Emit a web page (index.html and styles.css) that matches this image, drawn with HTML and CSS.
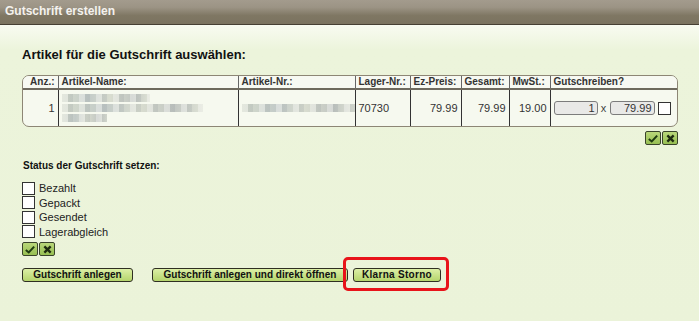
FILE: index.html
```html
<!DOCTYPE html>
<html lang="de">
<head>
  <meta charset="UTF-8" />
  <title>Gutschrift erstellen</title>
  <link rel="stylesheet" href="styles.css">
</head>
<body>
  <div class="titlebar">Gutschrift erstellen</div>

  <div class="content">
    <h1>Artikel für die Gutschrift auswählen:</h1>

    <div class="table-wrap">
      <table class="items">
        <colgroup>
          <col style="width:35px">
          <col style="width:180px">
          <col style="width:117px">
          <col style="width:55px">
          <col style="width:51px">
          <col style="width:48px">
          <col style="width:41px">
          <col>
        </colgroup>
        <thead>
          <tr>
            <th class="num">Anz.:</th>
            <th>Artikel-Name:</th>
            <th>Artikel-Nr.:</th>
            <th>Lager-Nr.:</th>
            <th>Ez-Preis:</th>
            <th>Gesamt:</th>
            <th>MwSt.:</th>
            <th>Gutschreiben?</th>
          </tr>
        </thead>
        <tbody>
          <tr>
            <td class="num">1</td>
            <td>
              <div class="blur"><span style="width:88px"></span><span style="width:141px"></span><span style="width:45px"></span></div>
            </td>
            <td>
              <div class="blur"><span style="width:113px"></span></div>
            </td>
            <td>70730</td>
            <td class="num">79.99</td>
            <td class="num">79.99</td>
            <td class="num">19.00</td>
            <td class="gut">
              <input class="field f-qty" type="text" value="1"><span class="times">x</span><input class="field f-price" type="text" value="79.99"><span class="box"></span>
            </td>
          </tr>
        </tbody>
      </table>
    </div>

    <div class="actions right">
      <span class="icon-btn"><svg viewBox="0 0 12 10" width="10" height="9"><path d="M1 5.5 L4.5 8.5 L11 1.5" fill="none" stroke="#1e3a10" stroke-width="2.4"/></svg></span><span class="icon-btn"><svg viewBox="0 0 10 10" width="9" height="9"><path d="M1.5 1.5 L8.5 8.5 M8.5 1.5 L1.5 8.5" fill="none" stroke="#1e2a10" stroke-width="2.6"/></svg></span>
    </div>

    <h2>Status der Gutschrift setzen:</h2>

    <ul class="status">
      <li><span class="box"></span>Bezahlt</li>
      <li><span class="box"></span>Gepackt</li>
      <li><span class="box"></span>Gesendet</li>
      <li><span class="box"></span>Lagerabgleich</li>
    </ul>

    <div class="actions">
      <span class="icon-btn"><svg viewBox="0 0 12 10" width="10" height="9"><path d="M1 5.5 L4.5 8.5 L11 1.5" fill="none" stroke="#1e3a10" stroke-width="2.4"/></svg></span><span class="icon-btn"><svg viewBox="0 0 10 10" width="9" height="9"><path d="M1.5 1.5 L8.5 8.5 M8.5 1.5 L1.5 8.5" fill="none" stroke="#1e2a10" stroke-width="2.6"/></svg></span>
    </div>

    <div class="buttons">
      <button class="btn">Gutschrift anlegen</button>
      <button class="btn btn-wide">Gutschrift anlegen und direkt öffnen</button>
      <span class="highlight"><button class="btn btn-klarna">Klarna Storno</button></span>
    </div>
  </div>
</body>
</html>
```

FILE: styles.css
```css
html, body {
  margin: 0;
  height: 100%;
}
body {
  font-family: "Liberation Sans", Arial, sans-serif;
  font-size: 11px;
  color: #222;
  background: linear-gradient(#f8fbf1 25px, #ecf4db 50px, #ebf3d9);
}
.titlebar {
  height: 24px;
  line-height: 23px;
  padding-left: 5px;
  font-size: 12px;
  font-weight: bold;
  white-space: nowrap;
  color: #f4f2ee;
  background: linear-gradient(#a39b8d, #9c9485 30%, #7f7763 65%, #7b7360);
  border-bottom: 1px solid #463f33;
}
.content {
  padding: 0 21px 0 22px;
}
h1 {
  margin: 22px 0 0 0;
  font-size: 13px;
  line-height: 15px;
  color: #111;
}
.table-wrap {
  margin-top: 13px;
  border: 1px solid #8d8675;
  border-radius: 7px;
  overflow: hidden;
  background: #f6f9ef;
}
.items {
  width: 100%;
  border-collapse: collapse;
  table-layout: fixed;
}
.items th {
  height: 12px;
  padding: 0 3px;
  font-size: 10px;
  line-height: 12px;
  text-align: left;
  white-space: nowrap;
  color: #333;
  background: #f7f9f2;
  border-left: 1px solid #666;
  border-bottom: 2px solid #6e6a5e;
}
.items th:first-child,
.items td:first-child {
  border-left: none;
}
.items td {
  height: 36px;
  padding: 0 3px;
  vertical-align: middle;
  white-space: nowrap;
  color: #333;
  border-left: 1px solid #333;
}
.items .num {
  text-align: right;
}
.blur span {
  display: block;
  height: 8px;
  margin: 2px 0;
  background:
    repeating-linear-gradient(90deg, rgba(255,255,255,0.35) 0 6px, rgba(120,130,140,0.15) 6px 11px, rgba(255,255,255,0) 11px 17px),
    linear-gradient(90deg, #d5dbcc, #c3cbc8 30%, #d9ddd0 55%, #c2c7c2 80%, #dfe3d6);
}
.gut {
  white-space: nowrap;
}
.field {
  box-sizing: border-box;
  height: 14px;
  padding: 0 2px;
  border: 1px solid #7c7c7c;
  border-radius: 3px;
  background: #e9e9e7;
  font-family: "Liberation Sans", Arial, sans-serif;
  font-size: 11px;
  color: #333;
  text-align: right;
  vertical-align: middle;
}
.f-qty { width: 44px; }
.f-price { width: 45px; }
.times {
  display: inline-block;
  width: 12px;
  text-align: center;
  vertical-align: middle;
  color: #444;
}
.box {
  display: inline-block;
  box-sizing: border-box;
  width: 13px;
  height: 13px;
  border: 1px solid #333;
  background: #fff;
  vertical-align: middle;
}
.gut .box {
  margin-left: 3px;
}
.actions {
  display: flex;
  gap: 1px;
  margin-top: 3px;
}
.actions.right {
  margin-top: 4px;
  justify-content: flex-end;
}
.icon-btn {
  display: flex;
  align-items: center;
  justify-content: center;
  box-sizing: border-box;
  width: 16px;
  height: 14px;
  border: 1px solid #39432a;
  border-radius: 2px;
  background: linear-gradient(#b9d77a, #97bf52);
}
h2 {
  margin: 14px 0 0 1px;
  font-size: 10px;
  line-height: 13px;
  color: #111;
}
.status {
  list-style: none;
  margin: 9px 0 0 0;
  padding: 0;
}
.status li {
  display: flex;
  align-items: center;
  gap: 4px;
  height: 14.5px;
  color: #222;
}
.buttons {
  display: flex;
  align-items: center;
  margin-top: 12px;
}
.btn {
  box-sizing: border-box;
  height: 14px;
  padding: 0;
  font-family: "Liberation Sans", Arial, sans-serif;
  font-size: 10px;
  font-weight: bold;
  line-height: 12px;
  color: #111;
  border: 1px solid #2f2f22;
  border-radius: 3px;
  background: linear-gradient(#dcefa6, #b5d56c);
  width: 111px;
}
.btn-wide {
  width: 196px;
  margin-left: 19px;
}
.highlight {
  display: inline-block;
  margin: -11px 0 -9px -5px;
  padding: 8px 5px 6px 7px;
  border: 3px solid #e8141a;
  border-radius: 5px;
}
.btn-klarna {
  display: block;
  width: 88px;
  letter-spacing: 0.3px;
}
```
